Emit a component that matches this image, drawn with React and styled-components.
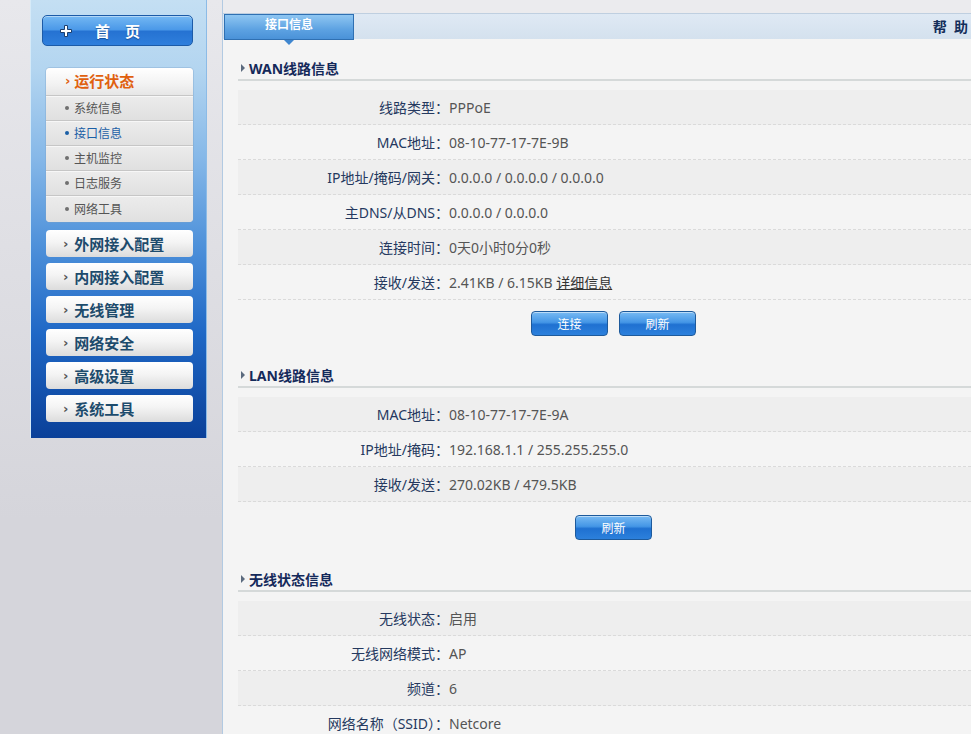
import React from "react";
import styled, { createGlobalStyle } from "styled-components";

const GlobalStyle = createGlobalStyle`
  html, body {
    margin: 0;
    padding: 0;
    overflow: hidden;
  }
  body {
    background: linear-gradient(#e8e8ec, #d5d5db 520px);
    font-family: "Noto Sans", "Noto Sans CJK SC", sans-serif;
  }
`;

const Page = styled.div`
  display: flex;
  align-items: flex-start;
  width: 971px;
  height: 734px;
`;

/* ---------- sidebar ---------- */

const Sidebar = styled.aside`
  margin-left: 30px;
  width: 177px;
  height: 438px;
  flex-shrink: 0;
  box-sizing: border-box;
  padding-top: 15px;
  display: flex;
  flex-direction: column;
  border-left: 1px solid #d6eaf8;
  border-right: 1px solid #8cbbe6;
  background: linear-gradient(
    #c4dff3 0%,
    #b3d5f0 16%,
    #86b8e8 36%,
    #4e91da 56%,
    #1f68c6 76%,
    #0a4099 100%
  );
`;

const HomeButton = styled.div`
  margin-left: 11px;
  width: 151px;
  height: 31px;
  box-sizing: border-box;
  border: 1px solid #1c5ba8;
  border-radius: 5px;
  display: flex;
  align-items: center;
  color: #fff;
  font-weight: bold;
  font-size: 15px;
  background: linear-gradient(#74b8f3 0%, #4a98e8 48%, #2572d2 52%, #2f7fdc 100%);
  box-shadow: inset 0 1px 0 rgba(255, 255, 255, 0.45);
  text-shadow: 0 1px 1px rgba(0, 40, 100, 0.5);

  svg {
    margin-left: 17px;
    margin-right: 23px;
  }

  span {
    letter-spacing: 15px;
  }
`;

const Group = styled.div`
  margin: 22px 0 0 15px;
  width: 147px;
  border-radius: 4px;
  overflow: hidden;
  background: #e2e2e2;
  box-shadow: 0 0 0 1px rgba(120, 160, 200, 0.35);
`;

const GroupHead = styled.div`
  height: 27px;
  display: flex;
  align-items: center;
  padding-left: 19px;
  padding-bottom: 2px;
  box-sizing: border-box;
  gap: 4px;
  background: linear-gradient(#ffffff, #f2f2f2 60%, #e6e6e6);
  color: #e0600e;
  font-weight: bold;
  font-size: 15px;
`;

const SubItem = styled.div`
  height: ${(p) => (p.$last ? 27 : 25)}px;
  box-sizing: border-box;
  display: flex;
  align-items: center;
  padding-left: 19px;
  gap: 5px;
  font-size: 12px;
  color: ${(p) => (p.$active ? "#1b5fa6" : "#555")};
  border-top: 1px solid #c6c6c6;
  box-shadow: inset 0 1px 0 #f7f7f7;
  background: linear-gradient(#ececec, #e0e0e0);

  &::before {
    content: "";
    width: 4px;
    height: 4px;
    border-radius: 50%;
    background: ${(p) => (p.$active ? "#1b5fa6" : "#707070")};
  }
`;

const MenuItem = styled.div`
  margin: ${(p) => (p.$first ? 8 : 6)}px 0 0 15px;
  width: 147px;
  height: 27px;
  box-sizing: border-box;
  border-radius: 4px;
  display: flex;
  align-items: center;
  padding-left: 17px;
  gap: 6px;
  background: linear-gradient(#ffffff 0%, #f4f4f4 45%, #dcdcdc 100%);
  color: #1d4b6c;
  font-weight: bold;
  font-size: 15px;
`;

const Chevron = styled.span`
  font-family: "DejaVu Sans", sans-serif;
  font-size: 13px;
  font-weight: bold;
  color: ${(p) => p.$color || "#555"};
`;

/* ---------- main ---------- */

const Main = styled.main`
  flex: 1;
  min-width: 0;
  margin-left: 15px;
  height: 734px;
  overflow: hidden;
  border-left: 1px solid #b2cae2;
  background: #f4f4f4;
`;

const TopStrip = styled.div`
  height: 13px;
  background: #ebebee;
`;

const HeaderBar = styled.div`
  height: 26px;
  box-sizing: border-box;
  border-top: 1px solid #bfcfe0;
  background: linear-gradient(#dfe9f4, #d4e1ee);
  display: flex;
  justify-content: space-between;
  align-items: flex-start;
`;

const Tab = styled.div`
  position: relative;
  margin-left: 1px;
  width: 130px;
  height: 26px;
  box-sizing: border-box;
  border: 1px solid #2f70b2;
  background: linear-gradient(#8fc6f2, #5da2e2 60%, #4a92d8);
  color: #fff;
  font-size: 12px;
  font-weight: bold;
  text-align: center;
  line-height: 19px;

  &::after {
    content: "";
    position: absolute;
    left: 59px;
    bottom: -6px;
    border-left: 5px solid transparent;
    border-right: 5px solid transparent;
    border-top: 5px solid #3f86cf;
  }
`;

const Help = styled.div`
  margin-right: 3px;
  line-height: 26px;
  font-size: 14px;
  font-weight: bold;
  color: #142e5a;
  white-space: pre;
`;

const Content = styled.div`
  padding-left: 15px;
`;

const SectionTitle = styled.div`
  margin-top: ${(p) => p.$top}px;
  height: 24px;
  box-sizing: border-box;
  display: flex;
  align-items: center;
  padding-left: 3px;
  gap: 4px;
  font-size: 14px;
  font-weight: bold;
  color: #14295a;
  border-bottom: 2px solid #d5d9d9;

  &::before {
    content: "";
    border-top: 4px solid transparent;
    border-bottom: 4px solid transparent;
    border-left: 4px solid #5b6a7e;
  }
`;

const Rows = styled.div`
  margin-top: 9px;
`;

const Row = styled.div`
  height: 35px;
  box-sizing: border-box;
  display: flex;
  align-items: center;
  font-size: 14px;
  background: ${(p) => (p.$odd ? "#eeeeee" : "#f4f4f4")};
  border-bottom: 1px dashed #dadada;
`;

const Label = styled.div`
  width: 211px;
  text-align: right;
  color: #25395f;
`;

const Value = styled.div`
  color: #555;

  a {
    color: #333;
    text-decoration: underline;
  }
`;

const ButtonRow = styled.div`
  display: flex;
  justify-content: center;
  gap: 11px;
  padding-left: 18px;
  margin-top: ${(p) => p.$top}px;
  margin-bottom: 28px;
`;

const Button = styled.button`
  width: 77px;
  height: 25px;
  border: 1px solid #1d5a9c;
  border-radius: 4px;
  color: #fff;
  font-family: "Noto Sans CJK SC", sans-serif;
  font-size: 12px;
  padding: 0;
  background: linear-gradient(#78baf3 0%, #4496e6 45%, #1f71d1 55%, #2c80dc 100%);
  box-shadow: inset 0 1px 0 rgba(255, 255, 255, 0.5);
`;

const subItems = ["系统信息", "接口信息", "主机监控", "日志服务", "网络工具"];
const menus = ["外网接入配置", "内网接入配置", "无线管理", "网络安全", "高级设置", "系统工具"];

const wan = [
  ["线路类型：", "PPPoE"],
  ["MAC地址：", "08-10-77-17-7E-9B"],
  ["IP地址/掩码/网关：", "0.0.0.0 / 0.0.0.0 / 0.0.0.0"],
  ["主DNS/从DNS：", "0.0.0.0 / 0.0.0.0"],
  ["连接时间：", "0天0小时0分0秒"],
  ["接收/发送：", "2.41KB / 6.15KB", true],
];

const lan = [
  ["MAC地址：", "08-10-77-17-7E-9A"],
  ["IP地址/掩码：", "192.168.1.1 / 255.255.255.0"],
  ["接收/发送：", "270.02KB / 479.5KB"],
];

const wireless = [
  ["无线状态：", "启用"],
  ["无线网络模式：", "AP"],
  ["频道：", "6"],
  ["网络名称（SSID）：", "Netcore"],
];

const InfoRows = ({ rows }) => (
  <Rows>
    {rows.map(([label, value, detail], i) => (
      <Row key={label} $odd={i % 2 === 0}>
        <Label>{label}</Label>
        <Value>
          {value}
          {detail && (
            <>
              {" "}
              <a>详细信息</a>
            </>
          )}
        </Value>
      </Row>
    ))}
  </Rows>
);

export default function App() {
  return (
    <Page>
      <GlobalStyle />
      <Sidebar>
        <HomeButton>
          <svg width="12" height="12" viewBox="0 0 12 12">
            <path
              d="M4.5 0.5h3v4h4v3h-4v4h-3v-4h-4v-3h4z"
              fill="#fff"
              stroke="#1b3f70"
              strokeWidth="1"
            />
          </svg>
          <span>首页</span>
        </HomeButton>

        <Group>
          <GroupHead>
            <Chevron $color="#e0600e">›</Chevron>运行状态
          </GroupHead>
          {subItems.map((s, i) => (
            <SubItem key={s} $active={i === 1} $last={i === subItems.length - 1}>
              {s}
            </SubItem>
          ))}
        </Group>

        {menus.map((m, i) => (
          <MenuItem key={m} $first={i === 0}>
            <Chevron>›</Chevron>
            {m}
          </MenuItem>
        ))}
      </Sidebar>

      <Main>
        <TopStrip />
        <HeaderBar>
          <Tab>接口信息</Tab>
          <Help>帮  助</Help>
        </HeaderBar>
        <Content>
          <SectionTitle $top={18}>WAN线路信息</SectionTitle>
          <InfoRows rows={wan} />
          <ButtonRow $top={11}>
            <Button>连接</Button>
            <Button>刷新</Button>
          </ButtonRow>

          <SectionTitle $top={0}>LAN线路信息</SectionTitle>
          <InfoRows rows={lan} />
          <ButtonRow $top={13}>
            <Button>刷新</Button>
          </ButtonRow>

          <SectionTitle $top={0}>无线状态信息</SectionTitle>
          <InfoRows rows={wireless} />
        </Content>
      </Main>
    </Page>
  );
}
